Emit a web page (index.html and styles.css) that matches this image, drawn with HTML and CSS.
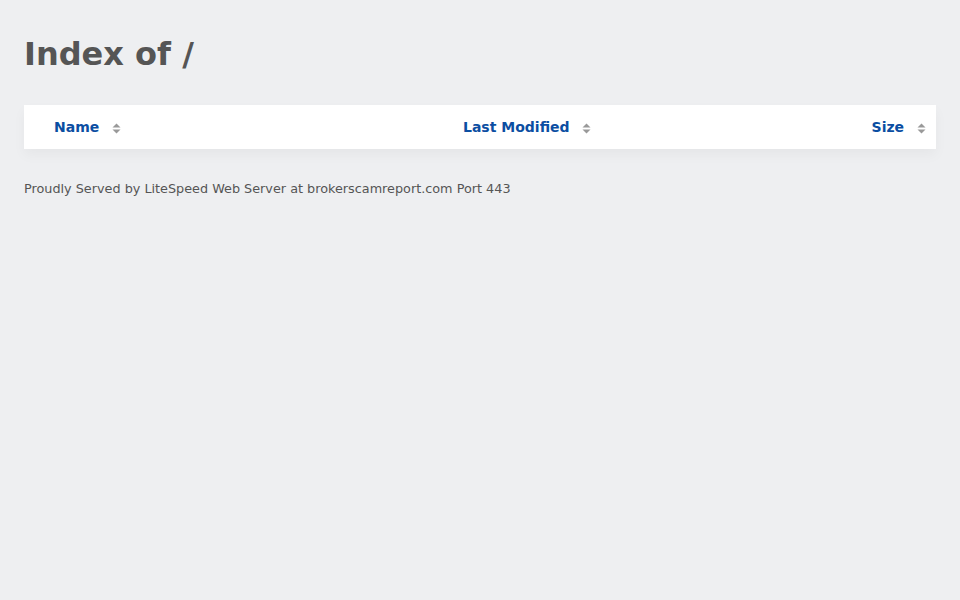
FILE: index.html
```html
<!DOCTYPE html>
<html lang="en">
<head>
    <meta charset="UTF-8">
    <title>Index of /</title>
    <link rel="stylesheet" href="styles.css">
</head>
<body>
    <h1>Index of /</h1>
    <table class="listing">
        <thead>
            <tr>
                <th class="col-name"><a href="?C=N&amp;O=A">Name</a> <span class="sort"><svg width="9" height="11" viewBox="0 0 9 11"><path d="M4.5 0.5L8.5 4.5H0.5Z"/><path d="M4.5 10.5L8.5 6.5H0.5Z"/></svg></span></th>
                <th class="col-mod"><a href="?C=M&amp;O=A">Last Modified</a> <span class="sort"><svg width="9" height="11" viewBox="0 0 9 11"><path d="M4.5 0.5L8.5 4.5H0.5Z"/><path d="M4.5 10.5L8.5 6.5H0.5Z"/></svg></span></th>
                <th class="col-size"><a href="?C=S&amp;O=A">Size</a> <span class="sort"><svg width="9" height="11" viewBox="0 0 9 11"><path d="M4.5 0.5L8.5 4.5H0.5Z"/><path d="M4.5 10.5L8.5 6.5H0.5Z"/></svg></span></th>
            </tr>
        </thead>
    </table>
    <address>Proudly Served by LiteSpeed Web Server at brokerscamreport.com Port 443</address>
</body>
</html>
```

FILE: styles.css
```css
body {
    background-color: #eeeff1;
    color: #555;
    font-family: "DejaVu Sans", sans-serif;
    margin: 0;
    padding: 24px;
}
h1 {
    font-size: 32px;
    font-weight: bold;
    margin: 12px 0 32px;
    line-height: 37px;
}
.listing {
    width: 100%;
    border-collapse: collapse;
    background-color: #fff;
    box-shadow: 0 6px 12px rgba(0, 0, 0, 0.04);
}
.listing th {
    height: 44px;
    padding: 0 10px 0 30px;
    font-size: 14px;
    font-weight: bold;
    text-align: left;
    white-space: nowrap;
}
.listing th a {
    color: #0b4ea2;
    text-decoration: none;
}
.col-name {
    width: 369px;
}
.listing th.col-size {
    text-align: right;
}
.sort {
    display: inline-block;
    margin-left: 8px;
    vertical-align: -2px;
}
.sort svg {
    fill: #999;
    display: block;
}
address {
    font-style: normal;
    font-size: 12.8px;
    margin-top: 32px;
}
```
